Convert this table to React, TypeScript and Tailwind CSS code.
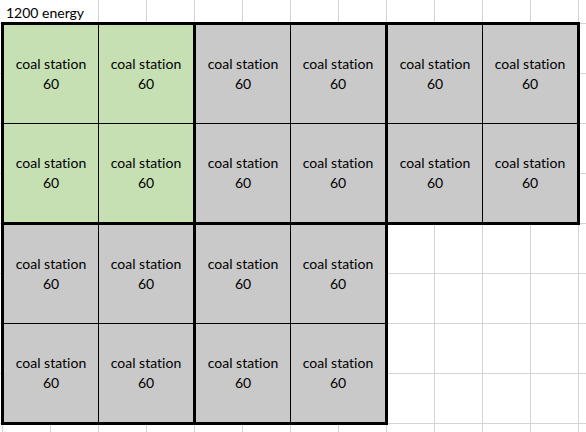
const blocks = [
  { id: 1, green: true },
  { id: 2, green: false },
  { id: 3, green: false },
];

const bottomBlocks = [
  { id: 4, green: false },
  { id: 5, green: false },
];

const Station = ({ green }: { green: boolean }) => (
  <div
    className={`flex flex-col items-center justify-center pb-px text-[14px] leading-[20px] text-black [font-variant-ligatures:none] ${
      green ? "bg-[#c6e0b4]" : "bg-[#c9c9c9]"
    }`}
  >
    <span>coal station</span>
    <span>60</span>
  </div>
);

// one bold-bordered 2x2 group of cells
const Block = ({ green, first }: { green: boolean; first: boolean }) => (
  <div className={`border-[3px] border-black ${first ? "" : "-ml-[3px]"}`}>
    <div className="grid grid-cols-[94px_94px] grid-rows-[98px_98px] gap-px bg-black">
      {[0, 1, 2, 3].map((i) => (
        <Station key={i} green={green} />
      ))}
    </div>
  </div>
);

const App = () => {
  return (
    <div
      className="w-[586px] h-[432px] overflow-hidden bg-white bg-[linear-gradient(to_right,#d4d4d4_1px,transparent_1px),linear-gradient(to_bottom,#d4d4d4_1px,transparent_1px)] bg-[size:48px_50px] bg-[position:2px_23px] pl-px"
      style={{ fontFamily: "Lato, 'Open Sans', sans-serif" }}
    >
      {/* header row */}
      <div className="-ml-px h-[22px] flex">
        <div className="w-[98px] bg-white pl-[6px] pt-[3px] text-[14px] leading-[20px] text-black">
          1200 energy
        </div>
      </div>

      {/* station blocks */}
      <div className="flex">
        {blocks.map((b, i) => (
          <Block key={b.id} green={b.green} first={i === 0} />
        ))}
      </div>
      <div className="flex -mt-[3px]">
        {bottomBlocks.map((b, i) => (
          <Block key={b.id} green={b.green} first={i === 0} />
        ))}
      </div>
    </div>
  );
};

export default App;
